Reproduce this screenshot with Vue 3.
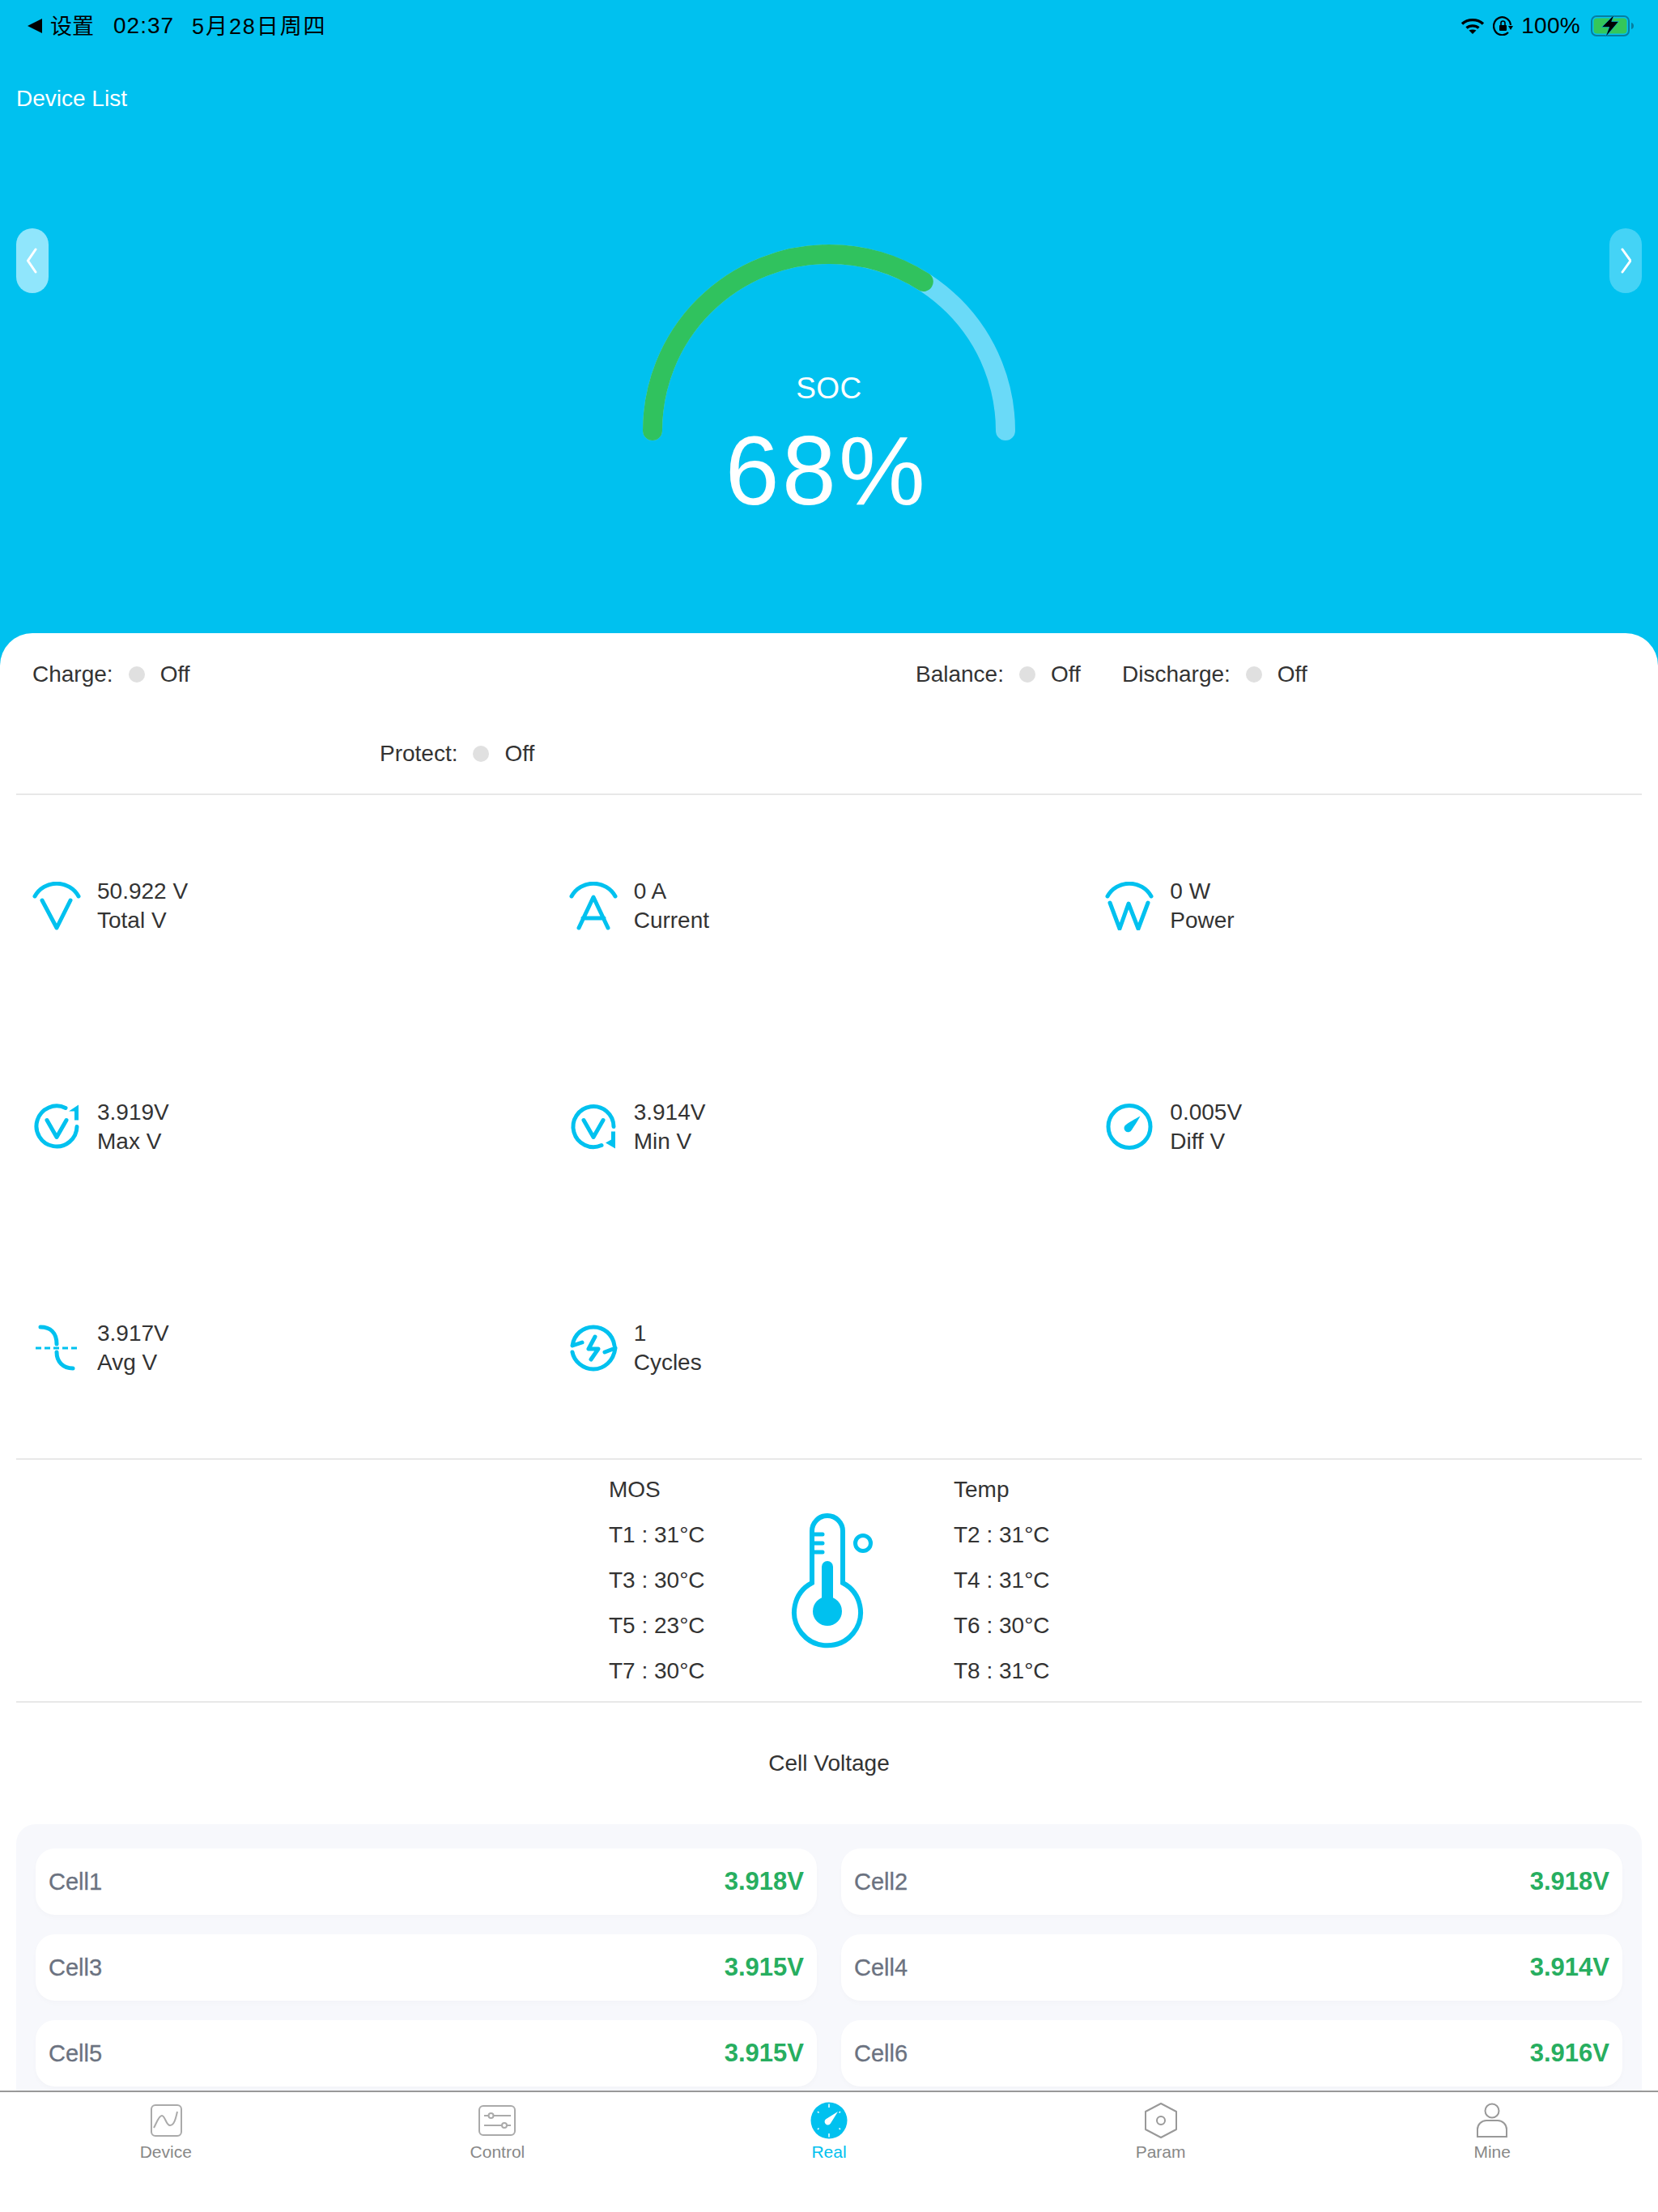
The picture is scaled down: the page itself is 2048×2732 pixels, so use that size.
<template>
  <div class="app">
    <div class="main">
      <div class="hero">
        <div class="status-bar">
          <div class="status-left">
            <svg class="back" width="20" height="18" viewBox="0 0 20 18"><path d="M19 0V18L1 9Z" /></svg>
            <span class="back-text">设置</span>
            <span class="clock">02:37</span>
            <span class="date">5月28日周四</span>
          </div>
          <div class="status-right">
            <svg width="30" height="20" viewBox="0 0 30 20" fill="none" stroke="#000" stroke-width="3.4">
              <path d="M2 7.5C9 1 21 1 28 7.5" />
              <path d="M7.5 12.5C11.5 9 18.5 9 22.5 12.5" />
              <path d="M15 20L10.5 15.5C13 14 17 14 19.5 15.5Z" fill="#000" stroke="none" />
            </svg>
            <svg class="rotate-lock" width="26" height="24" viewBox="0 0 26 24" fill="none" stroke="#000" stroke-width="2.2">
              <path d="M22 11A10.5 11 0 1 0 19 20" />
              <path d="M19 12L25 12L22 17Z" fill="#000" stroke="none" />
              <rect x="8" y="11" width="9" height="7" rx="1" fill="#000" stroke="none" />
              <path d="M10 11V8.500A2.500 2.500 0 0 1 15 8.500V11" stroke-width="1.600" />
            </svg>
            <span class="battery-text">100%</span>
            <svg width="56" height="28" viewBox="0 0 56 28" fill="none">
              <rect x="2" y="2" width="46" height="24" rx="6" stroke="#067ea0" stroke-width="2" />
              <rect x="4.500" y="4.500" width="41" height="19" rx="4" fill="#34c759" />
              <path d="M51 10C53 10.500 54 12 54 14C54 16 53 17.500 51 18Z" fill="#067ea0" />
              <path d="M30 0L14.600 15.500H23.700L19 28L35.500 8.500H26.700Z" fill="#000" stroke="#00c1ef" stroke-width="0.600" />
            </svg>
          </div>
        </div>

        <div class="device-list">Device List</div>

        <div class="gauge-row">
          <div class="side-btn side-left">
            <svg width="14" height="32" viewBox="0 0 14 32" fill="none"><path d="M11 2L1.500 16L11 30" /></svg>
          </div>
          <svg class="gauge" width="488" height="380" viewBox="0 0 488 380" fill="none">
            <path class="gauge-track" d="M26 236A218 218 0 0 1 462 236" />
            <path class="gauge-value" d="M26 236A218 218 0 0 1 462 236" pathLength="100" :stroke-dasharray="`${soc} 100`" />
            <text class="gauge-label" x="244" y="196">SOC</text>
            <text class="gauge-percent" x="241" y="327">{{ soc }}%</text>
          </svg>
          <div class="side-btn side-right">
            <svg width="14" height="32" viewBox="0 0 14 32" fill="none"><path d="M3 2L13 16L3 30" /></svg>
          </div>
        </div>
      </div>

      <div class="panel">
        <div class="states section">
          <div class="state-row state-row-top">
            <div v-for="s in topStates" :key="s" class="state">
              <span>{{ s }}:</span><i class="dot"></i><span>Off</span>
            </div>
          </div>
          <div class="state-row state-row-bottom">
            <div class="state">
              <span>Protect:</span><i class="dot"></i><span>Off</span>
            </div>
          </div>
        </div>

        <div class="metrics section">
          <div v-for="m in metrics" :key="m.label" class="metric">
            <svg class="metric-icon" width="60" height="60" viewBox="0 0 60 60" fill="none">
              <path v-for="d in m.strokes" :key="d" :d="d" />
              <path v-for="d in m.fills" :key="d" :d="d" class="solid" />
              <path v-if="m.dash" :d="m.dash" class="dash" />
            </svg>
            <div class="metric-text">
              <div>{{ m.value }}</div>
              <div>{{ m.label }}</div>
            </div>
          </div>
        </div>

        <div class="temps section">
          <div class="temp-col">
            <div v-for="t in mosTemps" :key="t">{{ t }}</div>
          </div>
          <div class="temp-icon">
            <svg width="128" height="176" viewBox="0 0 128 176" fill="none">
              <path class="thermo-line" d="M43 92V28A19 19 0 0 1 81 28V92A41 41 0 1 1 43 92Z" />
              <path class="thermo-tick" d="M44 32H56M44 43H56M44 54H56" />
              <path class="thermo-stem" d="M62 72V127" />
              <circle cx="62" cy="127" r="18" fill="#00c1ef" />
              <circle cx="106" cy="43" r="9.500" stroke="#00c1ef" stroke-width="5" />
            </svg>
          </div>
          <div class="temp-col">
            <div v-for="t in tempTemps" :key="t">{{ t }}</div>
          </div>
        </div>

        <div class="cell-title">Cell Voltage</div>

        <div class="cell-panel">
          <div v-for="c in cells" :key="c.name" class="cell">
            <span class="cell-name">{{ c.name }}</span>
            <span class="cell-value">{{ c.value }}</span>
          </div>
        </div>
      </div>
    </div>

    <div class="tabbar">
      <div class="tab">
        <svg width="48" height="48" viewBox="0 0 48 48" fill="none" stroke="#aaa" stroke-width="2">
          <rect x="6" y="5" width="37" height="38" rx="5" />
          <path d="M9 33C12 28 15 18 19 18C23 18 24 30 29 30C34 30 36 22 38 13" />
        </svg>
        <span>Device</span>
      </div>
      <div class="tab">
        <svg width="48" height="48" viewBox="0 0 48 48" fill="none" stroke="#aaa" stroke-width="2">
          <rect x="2" y="6" width="44" height="36" rx="5" />
          <path d="M8 18H13.500M19.500 18H41M8 30H30M36 30H41" />
          <circle cx="16.500" cy="18" r="3" />
          <circle cx="33" cy="30" r="3" />
        </svg>
        <span>Control</span>
      </div>
      <div class="tab tab-active">
        <svg width="48" height="48" viewBox="0 0 48 48" fill="none">
          <circle cx="24" cy="24" r="22.500" fill="#00c1ef" />
          <path d="M24 3.500V8M24 40V44.500M10 13L11.500 14.500M38 13L36.500 14.500M10 35L11.500 33.500M38 35L36.500 33.500" stroke="#fff" stroke-width="1.500" />
          <path d="M35 13L25.800 27.800A4 4 0 1 1 20.200 22.200Z" fill="#fff" />
        </svg>
        <span>Real</span>
      </div>
      <div class="tab">
        <svg width="48" height="48" viewBox="0 0 48 48" fill="none" stroke="#999" stroke-width="2" stroke-linejoin="round">
          <path d="M24 3L43 13V35L24 45L5 35V13Z" />
          <circle cx="24" cy="24" r="5" />
        </svg>
        <span>Param</span>
      </div>
      <div class="tab">
        <svg width="48" height="48" viewBox="0 0 48 48" fill="none" stroke="#999" stroke-width="2">
          <circle cx="24" cy="12" r="8.500" />
          <path d="M6 44V35A11 11 0 0 1 17 24H31A11 11 0 0 1 42 35V44Z" />
        </svg>
        <span>Mine</span>
      </div>
    </div>
  </div>
</template>

<script setup>
const soc = 68

const topStates = ['Charge', 'Balance', 'Discharge']

const arc = 'M3 18A31 31 0 0 1 57 18'

const metrics = [
  { value: '50.922 V', label: 'Total V', strokes: [arc, 'M12 23L30 57L47 23'] },
  { value: '0 A', label: 'Current', strokes: [arc, 'M12 57L30 19L48 57M17 45H43'] },
  { value: '0 W', label: 'Power', strokes: [arc, 'M6 26L18 58L29 27L41 58L53 26'] },
  {
    value: '3.919V',
    label: 'Max V',
    strokes: ['M55 29.500A25 25 0 1 1 41 6.500', 'M18 21.500L30 42.500L42 21.500'],
    fills: ['M57 2.500V21.500H52V10.500L45 10.500Z']
  },
  {
    value: '3.914V',
    label: 'Min V',
    strokes: ['M55 29.500A25 25 0 1 0 40 52.500', 'M18 21.500L30 42.500L42 21.500'],
    fills: ['M57 35.500V56.500L45 49.500L52 45.500V35.500Z']
  },
  {
    value: '0.005V',
    label: 'Diff V',
    strokes: ['M56 29.500A26 26 0 1 1 4 29.500A26 26 0 1 1 56 29.500'],
    fills: ['M43.500 16.500C37 20 30 24 26 27A5 5 0 1 0 33 33.500C36 29 40 23 43.500 16.500Z']
  },
  {
    value: '3.917V',
    label: 'Avg V',
    strokes: ['M10 4C22 4 30 11 30 25', 'M30 35C30 47 38 55 50 55'],
    dash: 'M4 30H57'
  },
  {
    value: '1',
    label: 'Cycles',
    strokes: [
      'M16 23L4 27C6 13 17 4 30 4C43 4 54 13 56 27',
      'M4 35C6 46 17 56 30 56C43 56 55 46 57 30L44 35',
      'M32 16L24 31H36L27 44'
    ]
  }
]

const mosTemps = ['MOS', 'T1 : 31°C', 'T3 : 30°C', 'T5 : 23°C', 'T7 : 30°C']
const tempTemps = ['Temp', 'T2 : 31°C', 'T4 : 31°C', 'T6 : 30°C', 'T8 : 31°C']

const cells = [
  { name: 'Cell1', value: '3.918V' },
  { name: 'Cell2', value: '3.918V' },
  { name: 'Cell3', value: '3.915V' },
  { name: 'Cell4', value: '3.914V' },
  { name: 'Cell5', value: '3.915V' },
  { name: 'Cell6', value: '3.916V' }
]
</script>

<style scoped>
.app {
  width: 2048px;
  height: 2732px;
  overflow: hidden;
  background: #fff;
  color: #333;
  font-family: "Liberation Sans", "Noto Sans CJK SC", sans-serif;
  font-size: 28px;
  display: flex;
  flex-direction: column;
}

.main {
  height: 2582px;
  flex: none;
  overflow: hidden;
  background: #00c1ef;
}

.hero {
  height: 782px;
}

/* status bar */
.status-bar {
  height: 64px;
  display: flex;
  justify-content: space-between;
  align-items: center;
  padding: 0 28px 0 33px;
  color: #000;
}

.status-left {
  display: flex;
  align-items: center;
}

.back { fill: #000; }
.back-text { margin: 0 0 4px 9px; font-size: 27px; }
.clock { margin-left: 24px; letter-spacing: 1px; }
.date { margin: 0 0 4px 22px; font-size: 27px; letter-spacing: 1.9px; }

.status-right {
  display: flex;
  align-items: center;
}

.rotate-lock { margin-left: 10px; }
.battery-text { margin-left: 9px; margin-right: 12px; letter-spacing: 0.3px; }

.device-list {
  margin-top: 36px;
  height: 44px;
  line-height: 44px;
  padding-left: 20px;
  color: #fff;
}

/* gauge */
.gauge-row {
  display: flex;
  justify-content: space-between;
  align-items: flex-start;
  padding: 0 20px;
}

.side-btn {
  width: 40px;
  height: 80px;
  margin-top: 138px;
  border-radius: 20px;
  display: flex;
  align-items: center;
  justify-content: center;
}

.side-btn path {
  stroke: #fff;
  stroke-width: 3;
  stroke-linecap: round;
}

.side-left { background: #90e6fc; }
.side-right { background: #44d3f6; }

.gauge { margin-top: 152px; }

.gauge-track {
  stroke: #6adaf8;
  stroke-width: 24;
  stroke-linecap: round;
}

.gauge-value {
  stroke: #30c25e;
  stroke-width: 24;
  stroke-linecap: round;
}

.gauge-label {
  fill: #fff;
  font-size: 37px;
  letter-spacing: 0.5px;
  text-anchor: middle;
}

.gauge-percent {
  fill: #fff;
  font-size: 120px;
  letter-spacing: 3.4px;
  text-anchor: middle;
}

/* white sheet */
.panel {
  min-height: 1800px;
  background: #fff;
  border-radius: 40px 40px 0 0;
}

.section {
  margin: 0 20px;
  border-bottom: 2px solid #e8e8e8;
}

.states {
  height: 200px;
  padding-top: 2px;
  box-sizing: border-box;
}

.state-row {
  height: 98px;
  align-items: center;
}

.state-row-top {
  display: grid;
  grid-template-columns: 1091px 255px auto;
  padding-left: 20px;
}

.state-row-bottom {
  display: flex;
  padding-left: 449px;
}

.state {
  display: flex;
  align-items: center;
  gap: 19px;
}

.dot {
  width: 20px;
  height: 20px;
  border-radius: 50%;
  background: #e0e0e0;
}

.metrics {
  display: grid;
  grid-template-columns: repeat(3, 1fr);
  grid-auto-rows: 273px;
  padding: 0 0 0 20px;
}

.metric {
  display: flex;
  align-items: center;
  gap: 20px;
}

.metric-icon path {
  stroke: #00c1ef;
  stroke-width: 5;
  stroke-linecap: round;
  stroke-linejoin: round;
}

.metric-icon .solid {
  fill: #00c1ef;
  stroke: none;
}

.metric-icon .dash {
  stroke-width: 3;
  stroke-dasharray: 7 4;
  stroke-linecap: butt;
}

.metric-text { line-height: 36px; }

.temps {
  display: flex;
  justify-content: center;
  padding: 9px 0;
}

.temp-col {
  width: 118px;
  line-height: 56px;
  white-space: nowrap;
}

.temp-icon {
  width: 308px;
  display: flex;
  align-items: center;
  justify-content: center;
}

.temp-icon svg { margin-bottom: 3px; }

.thermo-line { stroke: #00c1ef; stroke-width: 6; }
.thermo-tick { stroke: #00c1ef; stroke-width: 5; stroke-linecap: round; }
.thermo-stem { stroke: #00c1ef; stroke-width: 14; stroke-linecap: round; }

.cell-title {
  height: 150px;
  line-height: 150px;
  text-align: center;
}

.cell-panel {
  margin: 0 20px;
  padding: 30px 24px;
  background: #f7f8fc;
  border-radius: 24px;
  display: grid;
  grid-template-columns: 1fr 1fr;
  gap: 24px 30px;
}

.cell {
  height: 82px;
  background: #fff;
  border-radius: 24px;
  box-shadow: 0 3px 6px rgba(0, 0, 0, 0.02);
  display: flex;
  align-items: center;
  justify-content: space-between;
  padding: 0 16px;
}

.cell-name {
  color: #6b7280;
  font-size: 29px;
  -webkit-text-stroke: 0.3px #6b7280;
}

.cell-value {
  color: #27ae60;
  font-size: 31px;
  font-weight: 700;
}

/* tab bar */
.tabbar {
  height: 150px;
  box-sizing: border-box;
  flex: none;
  border-top: 2px solid #999;
  background: #fff;
  display: grid;
  grid-template-columns: repeat(5, 1fr);
  padding-top: 11px;
}

.tab {
  display: flex;
  flex-direction: column;
  align-items: center;
  font-size: 21px;
  line-height: 24px;
  color: #888;
}

.tab span { margin-top: 3px; }
.tab-active { color: #00c1ef; }
</style>
